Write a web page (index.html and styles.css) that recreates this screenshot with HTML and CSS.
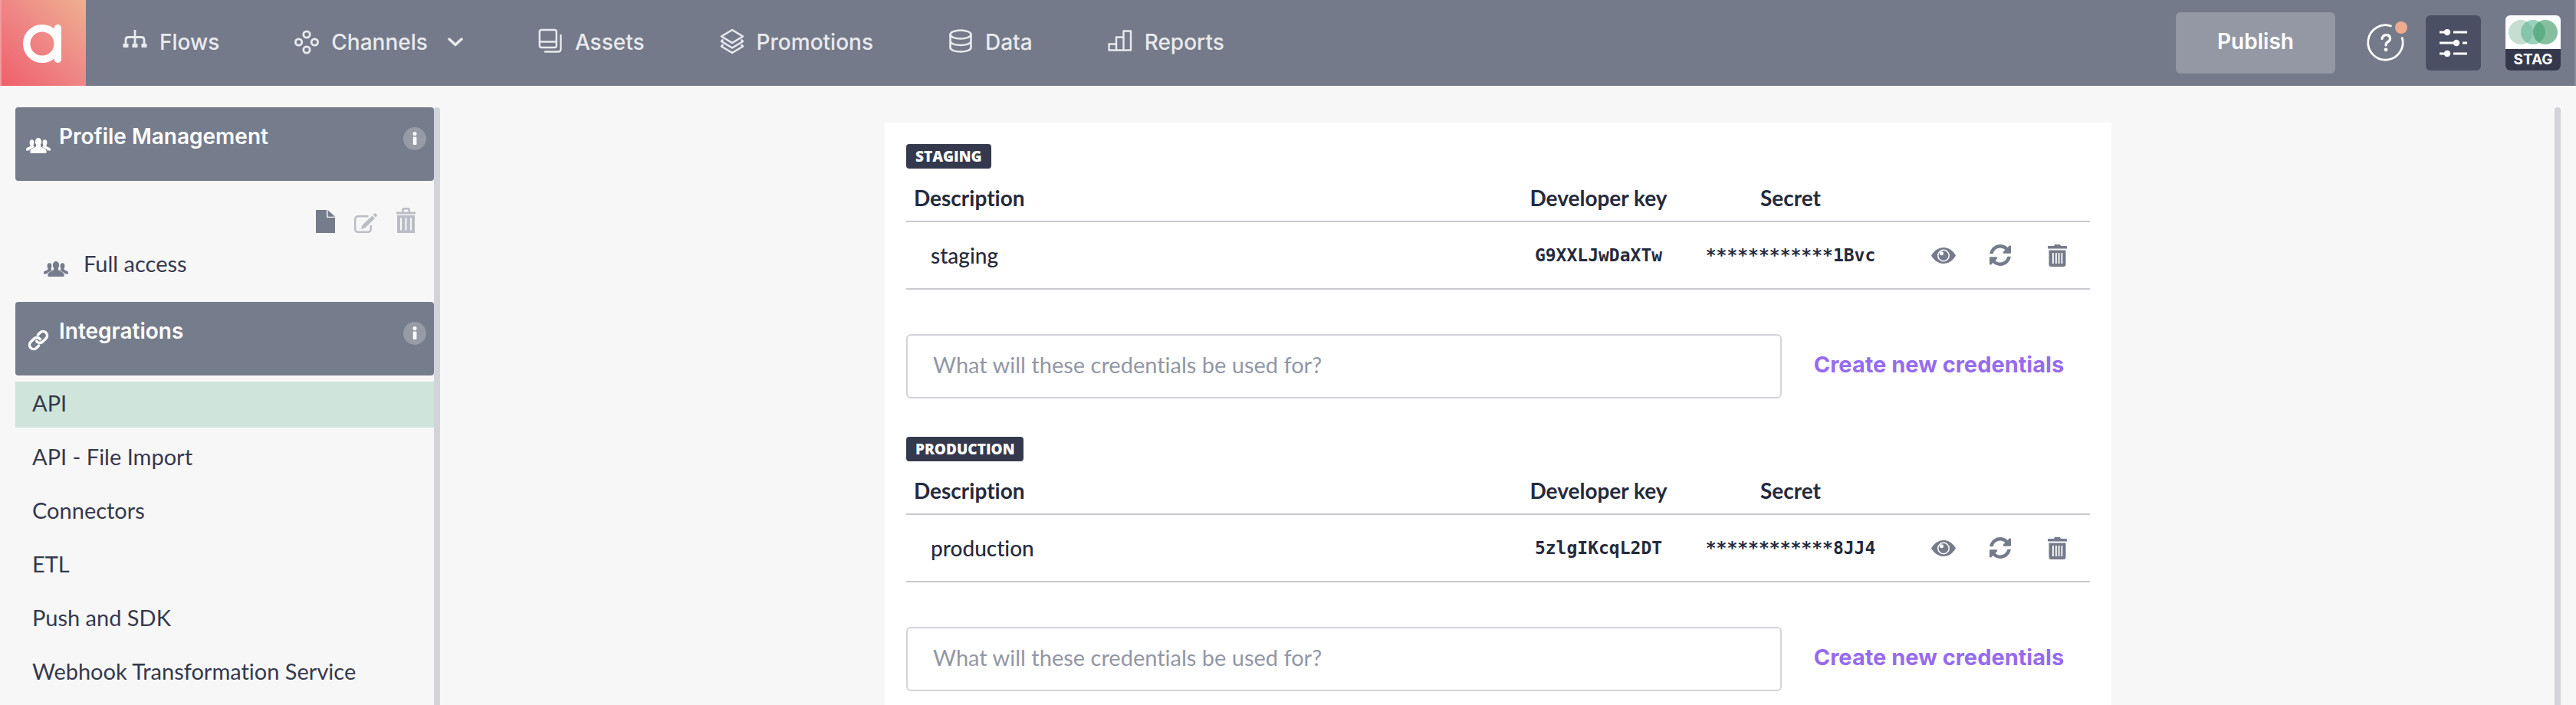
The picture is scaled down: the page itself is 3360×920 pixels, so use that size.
FILE: index.html
```html
<!DOCTYPE html>
<html lang="en">
<head>
<meta charset="utf-8">
<title>Integrations - API</title>
<link rel="stylesheet" href="styles.css">
</head>
<body>
<svg class="defs" aria-hidden="true">
  <symbol id="users" viewBox="0 0 32 20">
    <ellipse cx="16" cy="5" rx="4.2" ry="5"/>
    <path d="M13 8h6v3.200c1.500 1.600 7.500 2.300 7.500 6V20h-21v-2.800c0-3.700 6-4.400 7.500-6z"/>
    <ellipse cx="7.500" cy="6" rx="2.900" ry="3.800"/><ellipse cx="24.500" cy="6" rx="2.900" ry="3.800"/>
    <path d="M5.500 8h4.200c-.5 1.800 0 3 1.300 3.800L4.300 15.500V16.600H0v-2.200c0-1.900 4.600-2.500 5.500-4zM26.500 8h-4.200c.5 1.800 0 3-1.300 3.800l6.700 3.700v1.100H32v-2.200c0-1.900-4.600-2.500-5.500-4z"/>
  </symbol>
  <symbol id="link" viewBox="0 0 24 24">
    <g fill="none" stroke="currentColor" stroke-width="3" stroke-linecap="round">
      <path d="M10 13a4.500 4.500 0 0 0 7 .5l3.500-3.500a4.500 4.500 0 0 0-6.500-6.500l-2.500 2.500"/>
      <path d="M14 11a4.500 4.500 0 0 0-7-.5L3.500 14a4.500 4.500 0 0 0 6.500 6.500l2.500-2.500"/>
    </g>
  </symbol>
  <symbol id="info" viewBox="0 0 30 30">
    <circle cx="15" cy="15" r="15" fill="#fff" fill-opacity=".24"/>
    <circle cx="15" cy="8.500" r="2.500" fill="#fff"/><rect x="12.800" y="12.500" width="4.600" height="10.500" rx="1" fill="#fff"/>
  </symbol>
  <symbol id="eye" viewBox="0 0 32 21">
    <path d="M16 0C24 0 29.500 6 32 10.500 29.500 15 24 21 16 21S2.500 15 0 10.500C2.500 6 8 0 16 0z"/>
    <circle cx="16" cy="10.500" r="7.200" fill="none" stroke="#fff" stroke-width="1.500"/>
    <circle cx="13.500" cy="7.800" r="2.500" fill="#fff"/>
  </symbol>
  <symbol id="refresh" viewBox="8 8 496 496">
    <path d="M370.72 133.28C339.458 104.008 298.888 87.962 255.848 88c-77.458.068-144.328 53.178-162.791 126.850-1.344 5.363-6.122 9.150-11.651 9.150H24.103c-7.498 0-13.194-6.807-11.807-14.176C33.933 94.924 134.813 8 256 8c66.448 0 126.791 26.136 171.315 68.685L463.030 40.970C478.149 25.851 504 36.559 504 57.941V192c0 13.255-10.745 24-24 24H345.941c-21.382 0-32.090-25.851-16.971-40.971l41.750-41.749zM32 296h134.059c21.382 0 32.090 25.851 16.971 40.971l-41.750 41.750c31.262 29.273 71.835 45.319 114.876 45.280 77.418-.07 144.315-53.144 162.787-126.849 1.344-5.363 6.122-9.150 11.651-9.150h57.304c7.498 0 13.194 6.807 11.807 14.176C478.067 417.076 377.187 504 256 504c-66.448 0-126.791-26.136-171.315-68.685L48.970 471.030C33.851 486.149 8 475.441 8 454.059V320c0-13.255 10.745-24 24-24z"/>
  </symbol>
  <symbol id="trash" viewBox="0 0 25 29">
    <path fill-rule="evenodd" d="M1 2h7l1-2h7l1 2h7q1 0 1 1v2.500H0V3q0-1 1-1zM1.500 7.500h22V26q0 3-3 3h-16q-3 0-3-3zM6 11v14h1.800V11zM10 11v14h1.800V11zM13.700 11v14h1.800V11zM17.500 11v14h1.800V11z"/>
  </symbol>
  <symbol id="bin" viewBox="0 0 25 33">
    <path fill-rule="evenodd" d="M7 5.500V3q0-3 3-3h5q3 0 3 3v2.500h7V8.500H0V5.500zM9.500 5.500h6V4q0-1.500-1.500-1.500h-3Q9.500 2.500 9.500 4zM1 10h23v23H1zM5 13.500v16h2v-16zM11.500 13.500v16h2v-16zM18 13.500v16h2v-16z"/>
  </symbol>
  <symbol id="file" viewBox="0 0 25 30">
    <path d="M0 0h14v10h11v20H0zM15.500 0L25 8.700H15.500z"/>
  </symbol>
  <symbol id="edit" viewBox="0 0 30 26">
    <path d="M18.500 4.200H5.500q-4.300 0-4.300 4.300v12q0 4.300 4.300 4.300h12q4.300 0 4.300-4.300V16" fill="none" stroke="currentColor" stroke-width="2.400"/>
    <path d="M23.500 3.500l3.500 3.500-12.500 12.200-5.500 2 1.500-5.500zM24.600 2.400L26.500.5q.7-.7 1.400 0L29.700 2.300q.6.700 0 1.400L28 5.800z"/>
  </symbol>
</svg>

<header class="topbar">
  <a class="logo" href="#" aria-label="Home">
    <svg viewBox="0 0 110 112" stroke="#fff"><circle cx="53" cy="57" r="20.300" stroke-width="9.500"/><path d="M73.400 36.500v41" stroke-width="9.200" stroke-linecap="round"/></svg>
  </a>
  <nav class="nav">
    <a class="nav-item" href="#"><svg class="nav-icon" viewBox="0 0 32 32"><path d="M16 0v19M4 19v-6q0-3.500 3.500-3.500h17q3.500 0 3.500 3.500v6" stroke="currentColor" stroke-width="2.800"/><path d="M.5 18h7v5h-7zM12.500 18h7v5h-7zM24.500 18h7v5h-7z" fill="currentColor"/></svg>Flows</a>
    <a class="nav-item" href="#"><svg class="nav-icon" viewBox="0 0 32 32" stroke="currentColor" stroke-width="2.800"><circle cx="16" cy="6" r="4.200"/><circle cx="5.600" cy="16" r="4.200"/><circle cx="26.400" cy="16" r="4.200"/><circle cx="16" cy="26" r="4.200"/></svg>Channels<svg class="chevron" viewBox="0 0 20 12"><path d="M2 2l8 7.500L18 2" stroke="currentColor" stroke-width="3.500" stroke-linecap="round" stroke-linejoin="round"/></svg></a>
    <a class="nav-item" href="#"><svg class="nav-icon" viewBox="0 0 32 32" stroke="currentColor" stroke-width="2.400" stroke-linecap="round"><rect x="1.800" y="0" width="22" height="23" rx="2.500"/><path d="M2 15.500h22M29.500 7v18q0 3.500-3.500 3.500H9"/></svg>Assets</a>
    <a class="nav-item" href="#"><svg class="nav-icon" viewBox="0 0 32 32" stroke="currentColor" stroke-width="2.600" stroke-linejoin="round" stroke-linecap="round"><path d="M16 0L30 8.500 16 17 2 8.500zM3.500 13.500L2 15l14 8.500L30 15l-1.500-1.500M3.500 20L2 21.500 16 30l14-8.500-1.500-1.500"/></svg>Promotions</a>
    <a class="nav-item" href="#"><svg class="nav-icon" viewBox="0 0 32 32" stroke="currentColor" stroke-width="2.600"><ellipse cx="16" cy="6" rx="13.500" ry="5.500"/><path d="M2.500 6v17c0 7.300 27 7.300 27 0V6M2.500 14.500c0 7.300 27 7.300 27 0"/></svg>Data</a>
    <a class="nav-item" href="#"><svg class="nav-icon" viewBox="0 0 32 32" stroke="currentColor" stroke-width="2.400" stroke-linejoin="round"><path d="M1.500 26.500V18.500h9.500V9.500h9.500V1.500h9.500v25zM11 18.500v8M20.500 9.500v17"/></svg>Reports</a>
  </nav>
  <div class="tools">
    <button class="publish" type="button">Publish</button>
    <button class="help" type="button" aria-label="Help">
      <svg viewBox="0 0 52 56"><path d="M31.500 6.300A22.700 22.700 0 1 0 45 20.500" fill="none" stroke="#fff" stroke-width="2.700"/><path d="M19 22.500q1-4.800 5.500-4.800 5 0 5 4.600 0 3-3 4.500-2.500 1.300-2.500 4.200" fill="none" stroke="#fff" stroke-width="3.200" stroke-linecap="round"/><circle cx="24" cy="36.800" r="2.400" fill="#fff"/><circle cx="44" cy="8" r="8" fill="#eeab8f"/></svg>
    </button>
    <button class="settings" type="button" aria-label="Settings">
      <svg viewBox="0 0 36 36"><path d="M0 4h14M18 4h18M0 18h26M30 18h6M0 32h14M18 32h18" stroke="#fff" stroke-width="3"/><g fill="#fff"><circle cx="10" cy="4" r="4.200"/><circle cx="22" cy="18" r="4.200"/><circle cx="10" cy="32" r="4.200"/></g></svg>
    </button>
    <button class="env" type="button">
      <svg viewBox="0 0 72 44"><circle cx="20" cy="22" r="16" fill="#c6ddd2"/><circle cx="36" cy="22" r="16" fill="#5fb694" fill-opacity=".62"/><circle cx="52" cy="22" r="16" fill="#3d9a68" fill-opacity=".63"/></svg>
      <span class="env-name">STAG</span>
    </button>
  </div>
</header>

<div class="page">
  <aside class="sidebar">
    <div class="sidebar-body">
      <div class="group-head"><svg class="group-icon"><use href="#users"/></svg><h2 class="group-title">Profile Management</h2><svg class="info"><use href="#info"/></svg></div>
      <div class="actions">
        <button class="action" type="button" aria-label="New profile"><svg class="icon-file"><use href="#file"/></svg></button>
        <button class="action" type="button" aria-label="Edit profile" disabled><svg class="icon-edit"><use href="#edit"/></svg></button>
        <button class="action" type="button" aria-label="Delete profile" disabled><svg class="icon-bin"><use href="#bin"/></svg></button>
      </div>
      <a class="profile" href="#"><svg class="profile-icon"><use href="#users"/></svg>Full access</a>
      <div class="group-head"><svg class="group-icon link"><use href="#link"/></svg><h2 class="group-title">Integrations</h2><svg class="info"><use href="#info"/></svg></div>
      <nav class="menu">
        <a class="menu-item active" href="#">API</a>
        <a class="menu-item" href="#">API - File Import</a>
        <a class="menu-item" href="#">Connectors</a>
        <a class="menu-item" href="#">ETL</a>
        <a class="menu-item" href="#">Push and SDK</a>
        <a class="menu-item" href="#">Webhook Transformation Service</a>
      </nav>
    </div>
    <div class="scrollbar"></div>
  </aside>

  <main class="main">
    <div class="card">
      <section class="credentials">
        <span class="badge">STAGING</span>
        <table class="keys">
          <thead><tr><th>Description</th><th class="col-key">Developer key</th><th class="col-secret">Secret</th><td class="col-tools"></td></tr></thead>
          <tbody><tr><td>staging</td><td class="code">G9XXLJwDaXTw</td><td class="code">************1Bvc</td>
            <td><div class="row-tools">
              <button class="tool" type="button" aria-label="Show secret"><svg class="icon-eye"><use href="#eye"/></svg></button>
              <button class="tool" type="button" aria-label="Regenerate secret"><svg class="icon-refresh"><use href="#refresh"/></svg></button>
              <button class="tool" type="button" aria-label="Delete credentials"><svg class="icon-trash"><use href="#trash"/></svg></button>
            </div></td></tr></tbody>
        </table>
        <form class="create">
          <input class="field" type="text" aria-label="Staging credentials purpose" placeholder="What will these credentials be used for?">
          <button class="create-button" type="button">Create new credentials</button>
        </form>
      </section>
      <section class="credentials">
        <span class="badge">PRODUCTION</span>
        <table class="keys">
          <thead><tr><th>Description</th><th class="col-key">Developer key</th><th class="col-secret">Secret</th><td class="col-tools"></td></tr></thead>
          <tbody><tr><td>production</td><td class="code">5zlgIKcqL2DT</td><td class="code">************8JJ4</td>
            <td><div class="row-tools">
              <button class="tool" type="button" aria-label="Show secret"><svg class="icon-eye"><use href="#eye"/></svg></button>
              <button class="tool" type="button" aria-label="Regenerate secret"><svg class="icon-refresh"><use href="#refresh"/></svg></button>
              <button class="tool" type="button" aria-label="Delete credentials"><svg class="icon-trash"><use href="#trash"/></svg></button>
            </div></td></tr></tbody>
        </table>
        <form class="create">
          <input class="field" type="text" aria-label="Production credentials purpose" placeholder="What will these credentials be used for?">
          <button class="create-button" type="button">Create new credentials</button>
        </form>
      </section>
    </div>
  </main>
  <div class="scrollbar"></div>
</div>
</body>
</html>
```
FILE: styles.css
```css
* { box-sizing: border-box; }

body {
  margin: 0;
  height: 100vh;
  display: flex;
  flex-direction: column;
  overflow: hidden;
  background: #f7f7f7;
  color: #35394d;
  font: 29px/34px Lato, "Open Sans", sans-serif;
  font-variant-ligatures: none;
}

a { color: inherit; text-decoration: none; }
button { padding: 0; border: 0; background: none; color: inherit; font: inherit; cursor: pointer; }
svg { display: block; flex: none; fill: currentColor; }
.defs { position: absolute; width: 0; height: 0; }

/* Top bar */
.topbar {
  flex: none;
  display: flex;
  align-items: center;
  height: 112px;
  padding-right: 18px;
  border-right: 2px solid #8a8f9c;
  background: #747a8a;
  color: #fff;
  font-family: Inter, sans-serif;
  font-size: 28px;
  font-weight: 500;
}
.logo {
  width: 112px;
  border-left: 2px solid #f19a9c;
  background: linear-gradient(45deg, #ee6069, #ef8284 45%, #eeb08f);
}
.logo svg { width: 110px; height: 112px; fill: none; }
.nav { display: flex; gap: 98px; padding: 0 0 2px 48px; color: #e9eaee; }
.nav-item { display: flex; align-items: center; gap: 16px; }
.nav-icon { width: 32px; height: 32px; overflow: visible; fill: none; }
.chevron { width: 20px; height: 12px; margin-left: 10px; fill: none; }
.tools { display: flex; align-items: center; margin-left: auto; }
.publish {
  width: 208px;
  height: 80px;
  padding-bottom: 4px;
  margin-right: 42px;
  border-radius: 6px;
  background: #9498a4;
  font-weight: 600;
}
.help { margin-right: 24px; }
.help svg { width: 52px; height: 56px; overflow: visible; }
.settings {
  display: grid;
  place-items: center;
  width: 72px;
  height: 72px;
  margin-right: 32px;
  border-radius: 6px;
  background: #4b4f63;
}
.settings svg { width: 36px; height: 36px; }
.env { width: 72px; border-radius: 6px; overflow: hidden; background: #fff; }
.env svg { width: 72px; height: 44px; }
.env-name { display: block; background: #35384b; font-size: 19px; line-height: 28px; font-weight: 700; }

/* Page columns */
.page { flex: 1; min-height: 0; display: flex; padding: 28px 20px 0; }
.scrollbar { flex: none; width: 8px; border-radius: 4px 4px 0 0; background: #d3d4da; }

/* Sidebar */
.sidebar { flex: none; display: flex; width: 554px; }
.sidebar-body { flex: 1; }
.group-head {
  display: flex;
  align-items: flex-start;
  height: 96px;
  padding: 22px 10px 0 14px;
  border-radius: 4px;
  background: #757c8b;
  color: #fff;
}
.group-icon { width: 32px; height: 20px; margin: 18px 11px 0 0; }
.group-icon.link { height: 28px; margin-top: 14px; }
.group-title { flex: 1; margin: 0; font: 600 28px/32px Inter, sans-serif; }
.info { width: 30px; height: 30px; margin-top: 4px; }
.actions { display: flex; justify-content: flex-end; align-items: flex-end; gap: 25px; height: 68px; padding-right: 24px; color: #757c8b; }
.action:disabled { color: #babdc6; }
.icon-file { width: 25px; height: 30px; }
.icon-edit { width: 30px; height: 26px; }
.icon-bin { width: 25px; height: 33px; }
.profile { display: flex; align-items: flex-start; height: 90px; padding: 23px 0 0 37px; }
.profile-icon { width: 32px; height: 20px; margin: 14px 20px 0 0; color: #757c8b; }
.menu { display: grid; gap: 10px; margin-top: 8px; }
.menu-item { padding: 11px 22px 15px; }
.menu-item.active { background: #cfe5db; }

/* Credentials */
.main { flex: 1; min-width: 0; padding: 20px 0 0 2px; }
.card {
  display: grid;
  gap: 50px;
  max-width: 1600px;
  margin: 0 auto;
  padding: 28px 28px 60px;
  background: #fff;
  color: #252a3c;
}
.badge {
  display: table;
  padding: 0 12px;
  border-radius: 4px;
  background: #35394d;
  color: #fff;
  font: 800 19px/32px "Open Sans", sans-serif;
}
.keys { width: 100%; border-collapse: separate; border-spacing: 0; table-layout: fixed; font-size: 28px; }
.keys tr > * { border-bottom: 2px solid #c8cad1; }
.keys th { height: 70px; padding: 8px 0 0; font-weight: 700; text-align: center; }
.keys th:first-child { padding-left: 10px; text-align: left; }
.keys tbody td { height: 88px; padding: 0; }
.keys tbody td:first-child { padding-left: 32px; font-weight: 500; }
.col-key { width: 230px; }
.col-secret { width: 271px; }
.col-tools { width: 255px; }
.keys .code { font: 700 23px/32px "DejaVu Sans Mono", monospace; text-align: center; }
.row-tools { display: flex; justify-content: flex-end; color: #757b8b; padding-right: 6px; }
.tool { display: grid; place-items: center; width: 74px; height: 74px; }
.icon-eye { width: 32px; height: 21px; }
.icon-refresh { width: 28px; height: 28px; }
.icon-trash { width: 25px; height: 29px; }
.create { display: grid; grid-template-columns: 1fr 402px; margin-top: 58px; }
.field {
  width: 100%;
  height: 84px;
  padding: 0 33px 6px;
  border: 2px solid #d3d4da;
  border-radius: 6px;
  background: #fff;
  color: inherit;
  font: inherit;
}
.field::placeholder { color: #9297a5; opacity: 1; }
.create-button { padding: 0 0 4px 8px; color: #966bee; font-family: Inter, sans-serif; font-weight: 700; }
```
